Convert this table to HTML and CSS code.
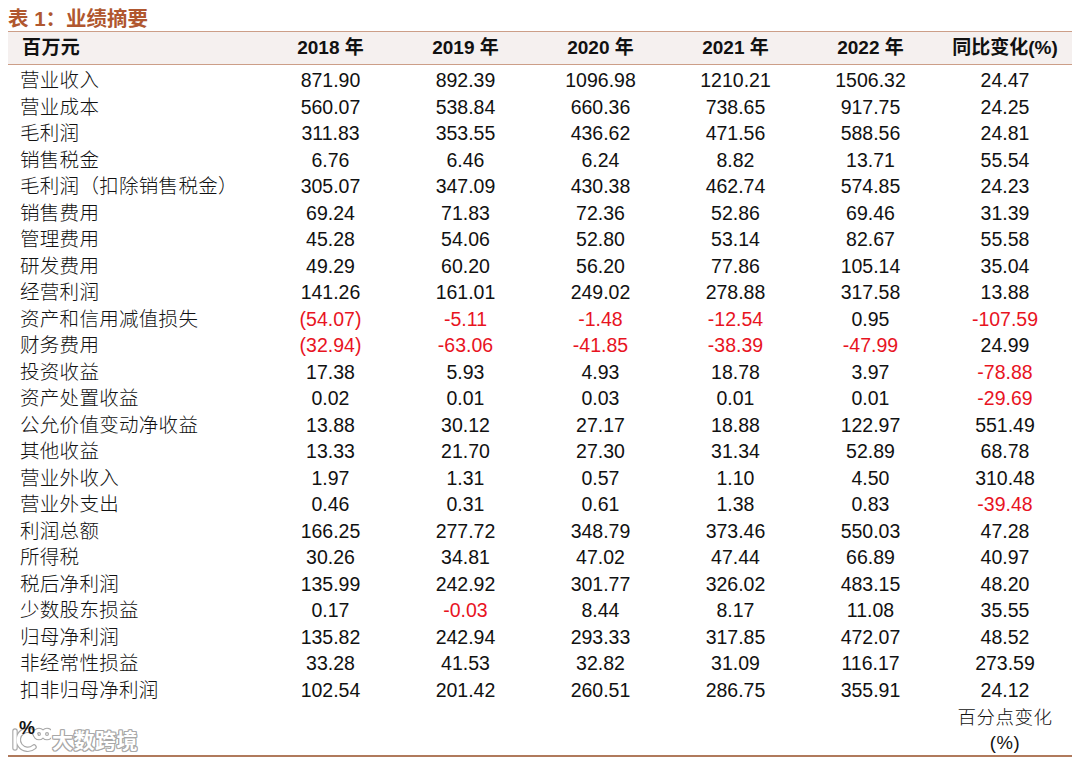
FILE: index.html
```html
<!DOCTYPE html>
<html lang="zh-CN">
<head>
<meta charset="utf-8">
<title>表 1：业绩摘要</title>
<link rel="stylesheet" href="styles.css">
</head>
<body>
<div class="page">
  <h1 class="title">表 1：业绩摘要</h1>
  <div class="table">
    <div class="row head">
      <div class="cell label">百万元</div>
      <div class="cell">2018 年</div>
      <div class="cell">2019 年</div>
      <div class="cell">2020 年</div>
      <div class="cell">2021 年</div>
      <div class="cell">2022 年</div>
      <div class="cell">同比变化(%)</div>
    </div>
    <div class="body">
      <div class="row"><div class="cell label">营业收入</div><div class="cell">871.90</div><div class="cell">892.39</div><div class="cell">1096.98</div><div class="cell">1210.21</div><div class="cell">1506.32</div><div class="cell">24.47</div></div>
      <div class="row"><div class="cell label">营业成本</div><div class="cell">560.07</div><div class="cell">538.84</div><div class="cell">660.36</div><div class="cell">738.65</div><div class="cell">917.75</div><div class="cell">24.25</div></div>
      <div class="row"><div class="cell label">毛利润</div><div class="cell">311.83</div><div class="cell">353.55</div><div class="cell">436.62</div><div class="cell">471.56</div><div class="cell">588.56</div><div class="cell">24.81</div></div>
      <div class="row"><div class="cell label">销售税金</div><div class="cell">6.76</div><div class="cell">6.46</div><div class="cell">6.24</div><div class="cell">8.82</div><div class="cell">13.71</div><div class="cell">55.54</div></div>
      <div class="row"><div class="cell label">毛利润（扣除销售税金）</div><div class="cell">305.07</div><div class="cell">347.09</div><div class="cell">430.38</div><div class="cell">462.74</div><div class="cell">574.85</div><div class="cell">24.23</div></div>
      <div class="row"><div class="cell label">销售费用</div><div class="cell">69.24</div><div class="cell">71.83</div><div class="cell">72.36</div><div class="cell">52.86</div><div class="cell">69.46</div><div class="cell">31.39</div></div>
      <div class="row"><div class="cell label">管理费用</div><div class="cell">45.28</div><div class="cell">54.06</div><div class="cell">52.80</div><div class="cell">53.14</div><div class="cell">82.67</div><div class="cell">55.58</div></div>
      <div class="row"><div class="cell label">研发费用</div><div class="cell">49.29</div><div class="cell">60.20</div><div class="cell">56.20</div><div class="cell">77.86</div><div class="cell">105.14</div><div class="cell">35.04</div></div>
      <div class="row"><div class="cell label">经营利润</div><div class="cell">141.26</div><div class="cell">161.01</div><div class="cell">249.02</div><div class="cell">278.88</div><div class="cell">317.58</div><div class="cell">13.88</div></div>
      <div class="row"><div class="cell label">资产和信用减值损失</div><div class="cell neg">(54.07)</div><div class="cell neg">-5.11</div><div class="cell neg">-1.48</div><div class="cell neg">-12.54</div><div class="cell">0.95</div><div class="cell neg">-107.59</div></div>
      <div class="row"><div class="cell label">财务费用</div><div class="cell neg">(32.94)</div><div class="cell neg">-63.06</div><div class="cell neg">-41.85</div><div class="cell neg">-38.39</div><div class="cell neg">-47.99</div><div class="cell">24.99</div></div>
      <div class="row"><div class="cell label">投资收益</div><div class="cell">17.38</div><div class="cell">5.93</div><div class="cell">4.93</div><div class="cell">18.78</div><div class="cell">3.97</div><div class="cell neg">-78.88</div></div>
      <div class="row"><div class="cell label">资产处置收益</div><div class="cell">0.02</div><div class="cell">0.01</div><div class="cell">0.03</div><div class="cell">0.01</div><div class="cell">0.01</div><div class="cell neg">-29.69</div></div>
      <div class="row"><div class="cell label">公允价值变动净收益</div><div class="cell">13.88</div><div class="cell">30.12</div><div class="cell">27.17</div><div class="cell">18.88</div><div class="cell">122.97</div><div class="cell">551.49</div></div>
      <div class="row"><div class="cell label">其他收益</div><div class="cell">13.33</div><div class="cell">21.70</div><div class="cell">27.30</div><div class="cell">31.34</div><div class="cell">52.89</div><div class="cell">68.78</div></div>
      <div class="row"><div class="cell label">营业外收入</div><div class="cell">1.97</div><div class="cell">1.31</div><div class="cell">0.57</div><div class="cell">1.10</div><div class="cell">4.50</div><div class="cell">310.48</div></div>
      <div class="row"><div class="cell label">营业外支出</div><div class="cell">0.46</div><div class="cell">0.31</div><div class="cell">0.61</div><div class="cell">1.38</div><div class="cell">0.83</div><div class="cell neg">-39.48</div></div>
      <div class="row"><div class="cell label">利润总额</div><div class="cell">166.25</div><div class="cell">277.72</div><div class="cell">348.79</div><div class="cell">373.46</div><div class="cell">550.03</div><div class="cell">47.28</div></div>
      <div class="row"><div class="cell label">所得税</div><div class="cell">30.26</div><div class="cell">34.81</div><div class="cell">47.02</div><div class="cell">47.44</div><div class="cell">66.89</div><div class="cell">40.97</div></div>
      <div class="row"><div class="cell label">税后净利润</div><div class="cell">135.99</div><div class="cell">242.92</div><div class="cell">301.77</div><div class="cell">326.02</div><div class="cell">483.15</div><div class="cell">48.20</div></div>
      <div class="row"><div class="cell label">少数股东损益</div><div class="cell">0.17</div><div class="cell neg">-0.03</div><div class="cell">8.44</div><div class="cell">8.17</div><div class="cell">11.08</div><div class="cell">35.55</div></div>
      <div class="row"><div class="cell label">归母净利润</div><div class="cell">135.82</div><div class="cell">242.94</div><div class="cell">293.33</div><div class="cell">317.85</div><div class="cell">472.07</div><div class="cell">48.52</div></div>
      <div class="row"><div class="cell label">非经常性损益</div><div class="cell">33.28</div><div class="cell">41.53</div><div class="cell">32.82</div><div class="cell">31.09</div><div class="cell">116.17</div><div class="cell">273.59</div></div>
      <div class="row"><div class="cell label">扣非归母净利润</div><div class="cell">102.54</div><div class="cell">201.42</div><div class="cell">260.51</div><div class="cell">286.75</div><div class="cell">355.91</div><div class="cell">24.12</div></div>
    </div>
    <div class="row foot">
      <div class="cell label pct">%</div>
      <div class="cell"></div>
      <div class="cell"></div>
      <div class="cell"></div>
      <div class="cell"></div>
      <div class="cell"></div>
      <div class="cell note">百分点变化<br>(%)</div>
      <div class="watermark">
        <svg class="wm-logo" width="42" height="28" viewBox="0 0 42 28">
          <g fill="none" stroke="#a8a8a8" stroke-width="5.5" stroke-linecap="round">
            <path d="M6 6 V23"/>
            <path d="M27 10 A9.5 9.5 0 1 0 25 22"/>
            <circle cx="30" cy="9" r="3.6"/>
            <circle cx="38" cy="9" r="3.6"/>
          </g>
          <g fill="none" stroke="#ffffff" stroke-width="3.2" stroke-linecap="round">
            <path d="M6 6 V23"/>
            <path d="M27 10 A9.5 9.5 0 1 0 25 22"/>
            <circle cx="30" cy="9" r="3.6"/>
            <circle cx="38" cy="9" r="3.6"/>
          </g>
        </svg>
        <span class="wm-text">大数跨境</span>
      </div>
    </div>
  </div>
</div>
</body>
</html>
```

FILE: styles.css
```css
html, body {
  margin: 0;
  padding: 0;
  background: #ffffff;
}

body {
  padding: 8px;
  font-family: "Liberation Sans", "Noto Sans CJK SC", sans-serif;
  color: #111111;
}

.page {
  width: 1064px;
}

.title {
  margin: 0;
  height: 23px;
  font-size: 20.5px;
  line-height: 22px;
  font-weight: 700;
  color: #b0572f;
  font-family: "Liberation Sans", "Noto Sans CJK SC", sans-serif;
}

.table {
  width: 1064px;
}

.row {
  display: grid;
  grid-template-columns: 255px repeat(5, 135px) 134px;
  height: 26.5px;
  align-items: center;
}

.cell {
  text-align: center;
  font-size: 19.5px;
  line-height: 24px;
  white-space: nowrap;
}

.cell.label {
  text-align: left;
  padding-left: 12px;
  letter-spacing: 0.3px;
  font-weight: 300;
}

.head {
  height: 34px;
  box-sizing: border-box;
  background: #f5f0ef;
  border-top: 1px solid #cc9e88;
  border-bottom: 1px solid #cc9e88;
}

.head .cell {
  font-weight: 700;
  font-size: 19px;
  color: #111111;
}

.head .cell.label {
  padding-left: 14px;
  letter-spacing: 0.4px;
  font-weight: 700;
}

.body {
  padding-top: 2px;
}

.neg {
  color: #e8141f;
}

.foot {
  position: relative;
  height: 54px;
  align-items: start;
  border-bottom: 2px solid #b07a5c;
  box-sizing: border-box;
}

.foot .pct {
  position: relative;
  z-index: 2;
  font-weight: 700;
  font-size: 18px;
  padding-left: 11px;
  padding-top: 15px;
  line-height: 20px;
}

.foot .note {
  font-size: 18.5px;
  line-height: 25px;
  padding-top: 2px;
  letter-spacing: 0.5px;
  font-weight: 300;
}

.watermark {
  position: absolute;
  z-index: 1;
  left: 1px;
  top: 22px;
  display: flex;
  align-items: center;
  gap: 1px;
  pointer-events: none;
}

.wm-text {
  font-family: "Noto Sans CJK SC", sans-serif;
  font-weight: 700;
  font-size: 21px;
  line-height: 26px;
  color: #ffffff;
  letter-spacing: 0.5px;
  text-shadow:
    1px 0 0 #a8a8a8, -1px 0 0 #a8a8a8,
    0 1px 0 #a8a8a8, 0 -1px 0 #a8a8a8,
    1px 1px 0 #a8a8a8, -1px -1px 0 #a8a8a8,
    1px -1px 0 #a8a8a8, -1px 1px 0 #a8a8a8;
}
```
